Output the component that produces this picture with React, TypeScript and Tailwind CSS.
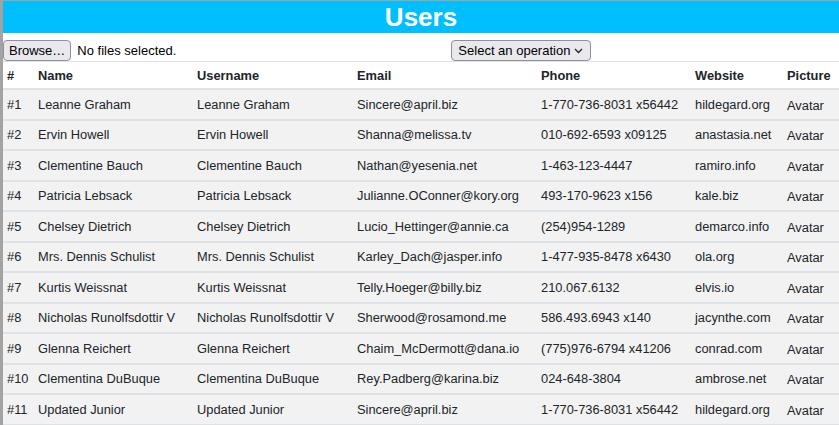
import React from "react";

const users = [
  ["#1", "Leanne Graham", "Leanne Graham", "Sincere@april.biz", "1-770-736-8031 x56442", "hildegard.org"],
  ["#2", "Ervin Howell", "Ervin Howell", "Shanna@melissa.tv", "010-692-6593 x09125", "anastasia.net"],
  ["#3", "Clementine Bauch", "Clementine Bauch", "Nathan@yesenia.net", "1-463-123-4447", "ramiro.info"],
  ["#4", "Patricia Lebsack", "Patricia Lebsack", "Julianne.OConner@kory.org", "493-170-9623 x156", "kale.biz"],
  ["#5", "Chelsey Dietrich", "Chelsey Dietrich", "Lucio_Hettinger@annie.ca", "(254)954-1289", "demarco.info"],
  ["#6", "Mrs. Dennis Schulist", "Mrs. Dennis Schulist", "Karley_Dach@jasper.info", "1-477-935-8478 x6430", "ola.org"],
  ["#7", "Kurtis Weissnat", "Kurtis Weissnat", "Telly.Hoeger@billy.biz", "210.067.6132", "elvis.io"],
  ["#8", "Nicholas Runolfsdottir V", "Nicholas Runolfsdottir V", "Sherwood@rosamond.me", "586.493.6943 x140", "jacynthe.com"],
  ["#9", "Glenna Reichert", "Glenna Reichert", "Chaim_McDermott@dana.io", "(775)976-6794 x41206", "conrad.com"],
  ["#10", "Clementina DuBuque", "Clementina DuBuque", "Rey.Padberg@karina.biz", "024-648-3804", "ambrose.net"],
  ["#11", "Updated Junior", "Updated Junior", "Sincere@april.biz", "1-770-736-8031 x56442", "hildegard.org"],
];

export default function App() {
  return (
    <div
      className="w-[839px] h-[425px] overflow-hidden border-t border-l-[3px] border-[#a3a3a3] bg-white text-[12.85px] text-[#212529]"
      style={{ fontFamily: '"Liberation Sans", Arial, sans-serif' }}
    >
      <div className="h-[32px] bg-[#00bfff] flex items-center justify-center">
        <h1 className="text-[26px] font-bold text-white leading-none">Users</h1>
      </div>
      <div className="h-[29px] flex items-start pt-[7px] border-b border-[#dee2e6]">
        <button className="h-[21px] px-[5px] border border-[#8f8f9d] rounded-[4px] bg-[#e9e9ed] text-[13px] leading-none text-black">
          Browse…
        </button>
        <span className="ml-[6px] mt-[4px] text-[13px] leading-none text-black">No files selected.</span>
        <div className="ml-[275px] h-[21px] w-[140px] border border-[#8f8f9d] rounded-[4px] bg-[#e9e9ed] flex items-center pl-[6px] pr-[7px] text-black text-[13px]">
          <span className="flex-1 leading-none">Select an operation</span>
          <svg width="9" height="6" viewBox="0 0 9 6" fill="none">
            <path d="M1 1l3.5 3.5L8 1" stroke="#222" strokeWidth="1.3" />
          </svg>
        </div>
      </div>
      <table className="w-[836px] table-fixed border-collapse">
        <colgroup>
          <col className="w-[31px]" />
          <col className="w-[159px]" />
          <col className="w-[160px]" />
          <col className="w-[184px]" />
          <col className="w-[154px]" />
          <col className="w-[92px]" />
          <col className="w-[56px]" />
        </colgroup>
        <thead>
          <tr className="h-[27px] border-b-2 border-[#dee2e6] text-left">
            {["#", "Name", "Username", "Email", "Phone", "Website", "Picture"].map((h) => (
              <th key={h} className="pl-[4px] pt-[2px] font-bold whitespace-nowrap">{h}</th>
            ))}
          </tr>
        </thead>
        <tbody>
          {users.map((u) => (
            <tr key={u[0]} className="h-[30.5px] bg-[#f2f2f2] border-b-2 border-[#dee2e6]">
              {u.map((c, i) => (
                <td key={i} className="pl-[4px] whitespace-nowrap overflow-hidden">{c}</td>
              ))}
              <td className="pl-[4px]"><span className="inline-block pt-[2px]">Avatar</span></td>
            </tr>
          ))}
        </tbody>
      </table>
    </div>
  );
}
